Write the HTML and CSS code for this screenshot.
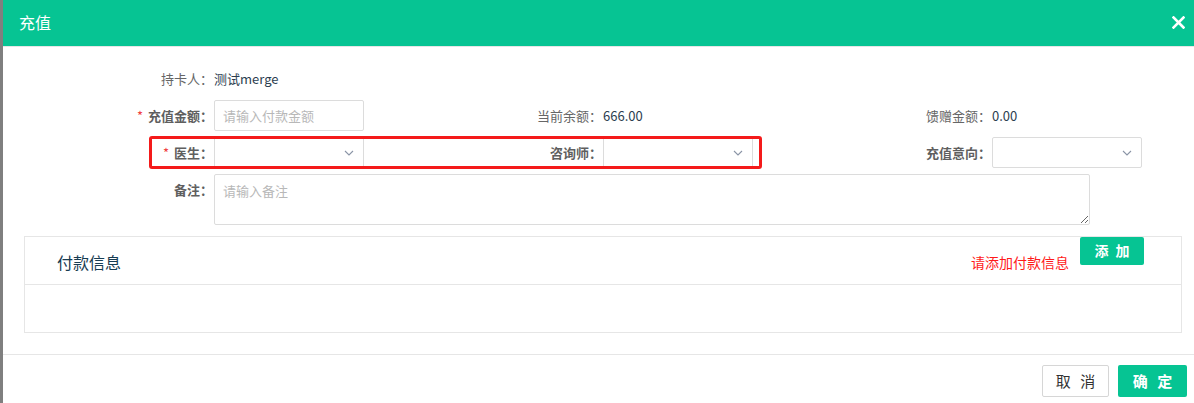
FILE: index.html
```html
<!DOCTYPE html>
<html lang="zh-CN">
<head>
<meta charset="utf-8">
<title>充值</title>
<link rel="stylesheet" href="styles.css">
</head>
<body>
<div class="page">
  <div class="backdrop-strip"></div>
  <div class="modal">
    <header class="modal-head">
      <span class="modal-title">充值</span>
      <span class="modal-close" aria-label="关闭">
        <svg width="13" height="13" viewBox="0 0 13 13"><path d="M1.5 1.5 L11.5 11.5 M11.5 1.5 L1.5 11.5" stroke="#fff" stroke-width="2.6" stroke-linecap="square"/></svg>
      </span>
    </header>
    <div class="modal-body">
      <div class="form-grid">
        <div class="item">
          <span class="label plain">持卡人：</span>
          <span class="value">测试merge</span>
        </div>
        <div class="item"></div>
        <div class="item"></div>

        <div class="item">
          <span class="label"><i class="req">*</i>充值金额：</span>
          <div class="input placeholder">请输入付款金额</div>
        </div>
        <div class="item">
          <span class="label plain">当前余额：</span>
          <span class="value">666.00</span>
        </div>
        <div class="item">
          <span class="label plain">馈赠金额：</span>
          <span class="value">0.00</span>
        </div>

        <div class="item">
          <span class="label"><i class="req">*</i>医生：</span>
          <div class="input select"><svg class="chev" width="10" height="6" viewBox="0 0 10 6"><path d="M1 1 L5 5 L9 1" fill="none" stroke="#8a94a6" stroke-width="1.1"/></svg></div>
        </div>
        <div class="item">
          <span class="label">咨询师：</span>
          <div class="input select"><svg class="chev" width="10" height="6" viewBox="0 0 10 6"><path d="M1 1 L5 5 L9 1" fill="none" stroke="#8a94a6" stroke-width="1.1"/></svg></div>
        </div>
        <div class="item">
          <span class="label">充值意向：</span>
          <div class="input select"><svg class="chev" width="10" height="6" viewBox="0 0 10 6"><path d="M1 1 L5 5 L9 1" fill="none" stroke="#8a94a6" stroke-width="1.1"/></svg></div>
        </div>

        <div class="item wide">
          <span class="label">备注：</span>
          <textarea class="textarea" placeholder="请输入备注"></textarea>
        </div>
      </div>

      <section class="panel">
        <div class="panel-head">
          <span class="panel-title">付款信息</span>
          <span class="panel-warn">请添加付款信息</span>
          <button class="btn-add">添 加</button>
        </div>
        <div class="panel-body"></div>
      </section>
    </div>
    <footer class="modal-foot">
      <button class="btn btn-cancel">取 消</button>
      <button class="btn btn-ok">确 定</button>
    </footer>
  </div>
  <div class="highlight"></div>
</div>
</body>
</html>
```

FILE: styles.css
```css
* { box-sizing: border-box; }
html, body { margin: 0; padding: 0; background: #fff; }
body {
  font-family: "Noto Sans CJK SC", "Microsoft YaHei", sans-serif;
  font-size: 13px;
  color: #333;
}
.page {
  position: relative;
  width: 1194px;
  height: 403px;
  display: flex;
  overflow: hidden;
}
.backdrop-strip {
  width: 3px;
  flex: none;
  background: #7f7f7f;
}
.modal {
  flex: 1;
  min-width: 0;
  display: flex;
  flex-direction: column;
  background: #fff;
}
.modal-head {
  height: 47px;
  flex: none;
  background: #06c493;
  border-bottom: 1px solid #e6e6e6;
  display: flex;
  align-items: center;
  justify-content: space-between;
  padding: 0 9px 2px 16px;
}
.modal-title {
  color: #fff;
  font-size: 16px;
  line-height: 20px;
}
.modal-close {
  display: flex;
  width: 13px;
  height: 13px;
}
.modal-body {
  padding-top: 16px;
}
.form-grid {
  display: grid;
  grid-template-columns: 389px 389px 1fr;
  grid-template-rows: 31px 31px 31px 51px;
  row-gap: 6px;
  margin-left: 101px;
}
.item {
  display: flex;
  align-items: center;
}
.item.wide {
  grid-column: 1 / -1;
  align-items: flex-start;
}
.label {
  width: 110px;
  flex: none;
  text-align: right;
  color: #5f5f5f;
  font-weight: bold;
  padding-right: 1px;
  line-height: 18px;
}
.label.plain {
  font-weight: normal;
  color: #666;
}
.item.wide .label { padding-top: 7px; }
.req {
  font-style: normal;
  color: #f04040;
  font-weight: normal;
  margin-right: 5px;
}
.value {
  color: #2c3e50;
  font-size: 13px;
  line-height: 18px;
}
.input {
  width: 150px;
  height: 31px;
  border: 1px solid #dcdcdc;
  border-radius: 2px;
  display: flex;
  align-items: center;
  padding: 0 8px;
  background: #fff;
}
.placeholder { color: #b8b8b8; }
.select { justify-content: flex-end; padding-right: 9px; }
.chev { display: block; }
.textarea {
  width: 876px;
  height: 51px;
  border: 1px solid #dcdcdc;
  border-radius: 2px;
  padding: 6px 8px;
  font-family: inherit;
  font-size: 13px;
  color: #333;
  resize: vertical;
  outline: none;
}
.textarea::placeholder { color: #b8b8b8; }
.panel {
  margin: 11px 12px 0 21px;
  border: 1px solid #e6e6e6;
}
.panel-head {
  height: 48px;
  border-bottom: 1px solid #e6e6e6;
  display: flex;
  align-items: center;
  padding: 0 37px 0 32px;
}
.panel-title {
  font-size: 16px;
  color: #173c52;
  padding-top: 2px;
  flex: 1;
}
.panel-warn {
  color: #ff1a1a;
  font-size: 14px;
  padding-top: 2px;
  margin-right: 11px;
}
.btn-add {
  align-self: flex-start;
  width: 64px;
  height: 28px;
  border: none;
  border-radius: 2px;
  background: #06c493;
  color: #fff;
  font-family: inherit;
  font-size: 14px;
  font-weight: bold;
  letter-spacing: 2px;
  padding: 0 0 2px 2px;
}
.panel-body { height: 47px; }
.modal-foot {
  margin-top: 21px;
  border-top: 1px solid #e6e6e6;
  display: flex;
  justify-content: flex-end;
  gap: 9px;
  padding: 10px 7px 0 0;
}
.btn {
  height: 32px;
  border-radius: 2px;
  font-family: inherit;
  font-size: 15px;
  letter-spacing: 3px;
  padding: 0 0 2px 3px;
}
.btn-cancel {
  width: 67px;
  background: #fff;
  border: 1px solid #d6d6d6;
  color: #333;
}
.btn-ok {
  width: 69px;
  background: #06c493;
  border: none;
  color: #fff;
  font-weight: bold;
}
.highlight {
  position: absolute;
  left: 149px;
  top: 136px;
  width: 613px;
  height: 33px;
  border: 3px solid #f41a1a;
  border-radius: 3px;
  pointer-events: none;
}
```
